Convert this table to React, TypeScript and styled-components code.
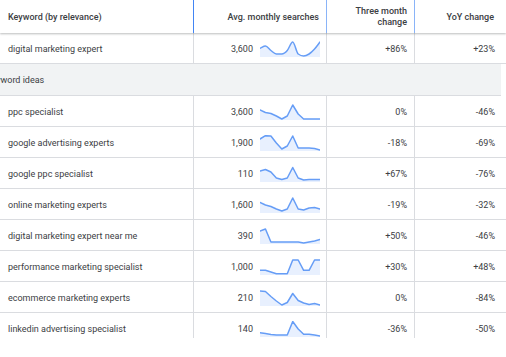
import styled, { createGlobalStyle } from 'styled-components'

const GlobalStyle = createGlobalStyle`
  html, body {
    margin: 0;
    padding: 0;
    background: #fff;
  }
  body {
    font-family: Roboto, "Liberation Sans", Arial, sans-serif;
    font-size: 9px;
    color: #3c4043;
  }
`

const COLS = '194px 133px 88px 87px'

const Frame = styled.div`
  width: 506px;
  height: 338px;
  overflow: hidden;
  background: #fff;
`

const HeaderRow = styled.div`
  display: grid;
  grid-template-columns: ${COLS};
  height: 33px;
  position: relative;
  z-index: 1;
  background: #fff;
  box-shadow: 0 1px 2px rgba(60, 64, 67, 0.35);
  font-weight: 500;
  color: #3c4043;
`

const HeadCell = styled.div<{ $align?: 'left' | 'right'; $line?: string }>`
  display: flex;
  align-items: center;
  justify-content: ${(p) => (p.$align === 'left' ? 'flex-start' : 'flex-end')};
  text-align: ${(p) => p.$align ?? 'right'};
  padding: ${(p) => (p.$align === 'left' ? '1px 0 0 8px' : '1px 7px 0 0')};
  line-height: 11px;
  border-right: 1px solid ${(p) => p.$line ?? 'transparent'};
`

const Row = styled.div<{ $height: number }>`
  display: grid;
  grid-template-columns: ${COLS};
  height: ${(p) => p.$height}px;
  box-sizing: border-box;
  border-bottom: 1px solid #dadce0;
`

const Cell = styled.div<{ $align?: 'left' | 'right'; $last?: boolean }>`
  display: flex;
  align-items: center;
  justify-content: ${(p) => (p.$align === 'left' ? 'flex-start' : 'flex-end')};
  padding: ${(p) => (p.$align === 'left' ? '1px 0 0 8px' : p.$last ? '1px 6px 0 0' : '1px 7px 0 0')};
  border-right: 1px solid ${(p) => (p.$last ? 'transparent' : '#dadce0')};
  white-space: nowrap;
`

const SearchCell = styled(Cell)`
  gap: 7px;
  padding-right: 6px;
`

const GroupRow = styled.div`
  height: 32px;
  box-sizing: border-box;
  display: flex;
  align-items: center;
  padding-top: 1px;
  background: #f1f3f4;
  border-bottom: 1px solid #dadce0;
  width: 501px;
`

const GroupLabel = styled.span`
  margin-left: -14px;
  white-space: nowrap;
`

const Spark = styled.svg`
  display: block;
  flex: none;
`

// monotone cubic so the curves stay soft without overshooting the box
function monotonePath(pts: [number, number][]) {
  const n = pts.length
  const s: number[] = []
  for (let i = 0; i < n - 1; i++) s.push((pts[i + 1][1] - pts[i][1]) / (pts[i + 1][0] - pts[i][0]))
  const m: number[] = new Array(n).fill(0)
  for (let i = 1; i < n - 1; i++) {
    if (s[i - 1] * s[i] <= 0) m[i] = 0
    else m[i] = (Math.sign(s[i - 1]) + Math.sign(s[i])) * Math.min(Math.abs(s[i - 1]), Math.abs(s[i]), 0.5 * Math.abs((s[i - 1] + s[i]) / 2))
  }
  m[0] = s[0]
  m[n - 1] = s[n - 2]
  let d = `M${pts[0][0]},${pts[0][1]}`
  for (let i = 0; i < n - 1; i++) {
    const h = (pts[i + 1][0] - pts[i][0]) / 3
    d += ` C${(pts[i][0] + h).toFixed(2)},${(pts[i][1] + m[i] * h).toFixed(2)} ${(pts[i + 1][0] - h).toFixed(2)},${(pts[i + 1][1] - m[i + 1] * h).toFixed(2)} ${pts[i + 1][0].toFixed(2)},${pts[i + 1][1]}`
  }
  return d
}

function Sparkline({ data, smooth }: { data: number[]; smooth?: boolean }) {
  const w = 60
  const h = 16
  const step = w / (data.length - 1)
  const pts = data.map((y, i) => [i * step, y] as [number, number])
  const line = smooth
    ? monotonePath(pts)
    : pts.map(([x, y], i) => `${i ? 'L' : 'M'}${x.toFixed(2)},${y}`).join(' ')
  const area = `${line} L${w},${h} L0,${h} Z`
  return (
    <Spark width={w} height={h} viewBox={`0 0 ${w} ${h}`}>
      <path d={area} fill="#e8f0fe" />
      <path d={line} fill="none" stroke="#669df6" strokeWidth={1.5} strokeLinejoin="round" strokeLinecap="round" />
    </Spark>
  )
}

type Kw = { name: string; volume: string; trend: number[]; three: string; yoy: string; smooth?: boolean }

const main: Kw = {
  name: 'digital marketing expert',
  volume: '3,600',
  trend: [7.3, 5, 9.5, 13, 13, 9.5, 1, 13, 15, 13, 8, 1],
  three: '+86%',
  yoy: '+23%',
  smooth: true,
}

const ideas: Kw[] = [
  { name: 'ppc specialist', volume: '3,600', trend: [6, 8.5, 9.5, 12, 15, 12, 1, 10, 15, 15, 15, 15], three: '0%', yoy: '-46%' },
  { name: 'google advertising experts', volume: '1,900', trend: [4, 0.7, 1, 8, 14, 11, 1, 13, 13, 13, 13.5, 15], three: '-18%', yoy: '-69%' },
  { name: 'google ppc specialist', volume: '110', trend: [5, 3.5, 6, 12, 13.5, 12, 1.5, 12, 14, 13.5, 13.5, 13.5], three: '+67%', yoy: '-76%' },
  { name: 'online marketing experts', volume: '1,600', trend: [5.5, 8, 9.5, 12, 14, 12, 1, 12, 13, 11, 10.5, 12], three: '-19%', yoy: '-32%' },
  { name: 'digital marketing expert near me', volume: '390', trend: [3, 1, 14, 14, 14, 14, 14, 14, 15, 14, 13, 11.5], three: '+50%', yoy: '-46%' },
  { name: 'performance marketing specialist', volume: '1,000', trend: [11.3, 11.3, 13, 14.7, 14.7, 14.7, 1, 1, 11.3, 11.3, 1, 1], three: '+30%', yoy: '+48%' },
  { name: 'ecommerce marketing experts', volume: '210', trend: [1, 1.5, 6.5, 11, 15, 12.5, 3.5, 10.5, 13, 14.5, 13.5, 15], three: '0%', yoy: '-84%' },
  { name: 'linkedin advertising specialist', volume: '140', trend: [11.7, 12.5, 13.5, 14, 14, 14, 0.5, 8, 13.3, 13.3, 14, 15], three: '-36%', yoy: '-50%' },
]

function KeywordRow({ kw, height }: { kw: Kw; height: number }) {
  return (
    <Row $height={height}>
      <Cell $align="left">{kw.name}</Cell>
      <SearchCell>
        {kw.volume}
        <Sparkline data={kw.trend} smooth={kw.smooth} />
      </SearchCell>
      <Cell>{kw.three}</Cell>
      <Cell $last>{kw.yoy}</Cell>
    </Row>
  )
}

export default function App() {
  return (
    <>
      <GlobalStyle />
      <Frame>
        <HeaderRow>
          <HeadCell $align="left" $line="#4285f4">Keyword (by relevance)</HeadCell>
          <HeadCell $line="#8ab4f8">Avg. monthly searches</HeadCell>
          <HeadCell $line="#8ab4f8">
            Three month
            <br />
            change
          </HeadCell>
          <HeadCell>YoY change</HeadCell>
        </HeaderRow>

        <KeywordRow kw={main} height={31} />

        <GroupRow>
          <GroupLabel>Keyword ideas</GroupLabel>
        </GroupRow>

        {ideas.map((kw) => (
          <KeywordRow key={kw.name} kw={kw} height={31} />
        ))}
      </Frame>
    </>
  )
}
